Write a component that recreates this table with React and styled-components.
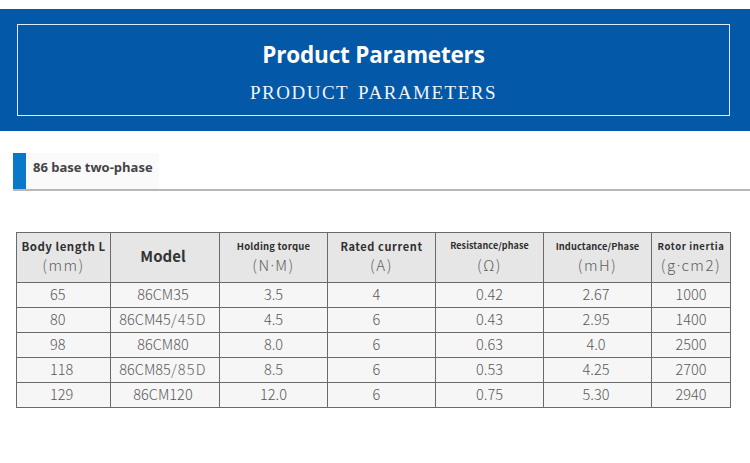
import React from "react";
import styled, { createGlobalStyle } from "styled-components";

const Global = createGlobalStyle`
  html, body { margin: 0; padding: 0; background: #ffffff; }
  body { font-family: "Noto Sans CJK SC", "Noto Sans", sans-serif; }
`;

const Page = styled.div`
  width: 750px;
  height: 463px;
  padding-top: 9px;
  box-sizing: border-box;
  overflow: hidden;
  background: #ffffff;
`;

const Banner = styled.header`
  background: #0358a8;
  padding: 15px 20px 15px 17px;
  height: 122px;
  box-sizing: border-box;
`;

const Frame = styled.div`
  height: 92px;
  box-sizing: border-box;
  border: 1px solid #dcecfb;
  display: flex;
  flex-direction: column;
  align-items: center;
  padding-top: 15px;
`;

const Title = styled.h1`
  margin: 0;
  font-family: "Open Sans", sans-serif;
  font-weight: 700;
  font-size: 22.5px;
  line-height: 30px;
  color: #ffffff;
  letter-spacing: -0.2px;
`;

const Subtitle = styled.h2`
  margin: 11px 0 0;
  font-family: "Liberation Serif", serif;
  font-weight: 400;
  font-size: 19px;
  line-height: 24px;
  color: #eef5ff;
  letter-spacing: 1.5px;
  word-spacing: 3px;
`;

const Section = styled.div`
  margin: 22px 0 0 13px;
  height: 36px;
  display: flex;
  align-items: stretch;
  border-bottom: 2px solid #b8b8b8;
`;

const Bar = styled.span`
  width: 13px;
  background: #0a78c8;
`;

const Label = styled.span`
  display: flex;
  align-items: center;
  padding: 0 6px 8px 7px;
  background: #fafafa;
  font-family: "Open Sans", sans-serif;
  font-weight: 700;
  font-size: 13px;
  color: #444448;
`;

const Table = styled.table`
  margin: 41px 0 0 16px;
  border-collapse: collapse;
  table-layout: fixed;
  width: 714px;
  font-family: "Noto Sans CJK SC", "Noto Sans", sans-serif;
`;

const HeadCell = styled.th`
  height: 50px;
  padding: 5px 0 0;
  box-sizing: border-box;
  background: #e6e6e6;
  border: 1px solid #6a6a6a;
  vertical-align: top;
  text-align: center;
  font-weight: 400;
`;

const ModelHead = styled(HeadCell)`
  vertical-align: middle;
  padding: 0 4px 5px 0;
  font-weight: 700;
  font-size: 15px;
  color: #333333;
`;

const HeadLabel = styled.div`
  font-weight: 700;
  font-size: ${(p) => p.$size || 11}px;
  letter-spacing: ${(p) => p.$ls || 0}px;
  line-height: 16px;
  color: #2f2f2f;
  white-space: nowrap;
`;

const HeadUnit = styled.div`
  margin-top: 1px;
  font-size: 15px;
  font-weight: 300;
  line-height: 20px;
  color: #5e5e5e;
  white-space: nowrap;
  letter-spacing: 1.5px;
`;

const Dot = styled.span`
  font-family: "Noto Sans", sans-serif;
  letter-spacing: 1px;
`;

const Row = styled.tr`
  background: #f6f6f6;
`;

const Cell = styled.td`
  height: 25px;
  padding: 0 ${(p) => p.$pr || 0}px 2px ${(p) => p.$pl || 0}px;
  box-sizing: border-box;
  border: 1px solid #6a6a6a;
  text-align: ${(p) => p.$align || "center"};
  vertical-align: middle;
  font-size: 14.5px;
  font-weight: 300;
  line-height: 22px;
  color: #595959;
  white-space: nowrap;
`;

const Suffix = styled.span`
  letter-spacing: 1.2px;
  color: #666666;
`;

const cols = [94, 109, 108, 108, 108, 108, 79];

const rows = [
  ["65", ["86CM35"], "3.5", "4", "0.42", "2.67", "1000"],
  ["80", ["86CM45", "/45D"], "4.5", "6", "0.43", "2.95", "1400"],
  ["98", ["86CM80"], "8.0", "6", "0.63", "4.0", "2500"],
  ["118", ["86CM85", "/85D"], "8.5", "6", "0.53", "4.25", "2700"],
  ["129", ["86CM120"], "12.0", "6", "0.75", "5.30", "2940"],
];

export default function App() {
  return (
    <Page>
      <Global />
      <Banner>
        <Frame>
          <Title>Product Parameters</Title>
          <Subtitle>PRODUCT PARAMETERS</Subtitle>
        </Frame>
      </Banner>
      <Section>
        <Bar />
        <Label>86 base two-phase</Label>
      </Section>
      <Table>
        <colgroup>
          {cols.map((w, i) => (
            <col key={i} style={{ width: w }} />
          ))}
        </colgroup>
        <thead>
          <tr>
            <HeadCell>
              <HeadLabel $size={11.5} $ls={0.5}>Body length L</HeadLabel>
              <HeadUnit>(mm)</HeadUnit>
            </HeadCell>
            <ModelHead>Model</ModelHead>
            <HeadCell>
              <HeadLabel $size={9.5} $ls={0.2}>Holding torque</HeadLabel>
              <HeadUnit>(N<Dot>·</Dot>M)</HeadUnit>
            </HeadCell>
            <HeadCell>
              <HeadLabel $size={11} $ls={0.6}>Rated current</HeadLabel>
              <HeadUnit>(A)</HeadUnit>
            </HeadCell>
            <HeadCell>
              <HeadLabel $size={9} $ls={0.1}>Resistance/phase</HeadLabel>
              <HeadUnit>(Ω)</HeadUnit>
            </HeadCell>
            <HeadCell>
              <HeadLabel $size={9.3} $ls={0.1}>Inductance/Phase</HeadLabel>
              <HeadUnit>(mH)</HeadUnit>
            </HeadCell>
            <HeadCell>
              <HeadLabel $size={9.5} $ls={0.6}>Rotor inertia</HeadLabel>
              <HeadUnit>(g<Dot>·</Dot>cm2)</HeadUnit>
            </HeadCell>
          </tr>
        </thead>
        <tbody>
          {rows.map((r, i) => (
            <Row key={i}>
              <Cell $align="left" $pl={33}>{r[0]}</Cell>
              <Cell $pr={4}>
                {r[1][0]}
                {r[1][1] && <Suffix>{r[1][1]}</Suffix>}
              </Cell>
              <Cell>{r[2]}</Cell>
              <Cell $pr={10}>{r[3]}</Cell>
              <Cell>{r[4]}</Cell>
              <Cell $pr={3}>{r[5]}</Cell>
              <Cell>{r[6]}</Cell>
            </Row>
          ))}
        </tbody>
      </Table>
    </Page>
  );
}
